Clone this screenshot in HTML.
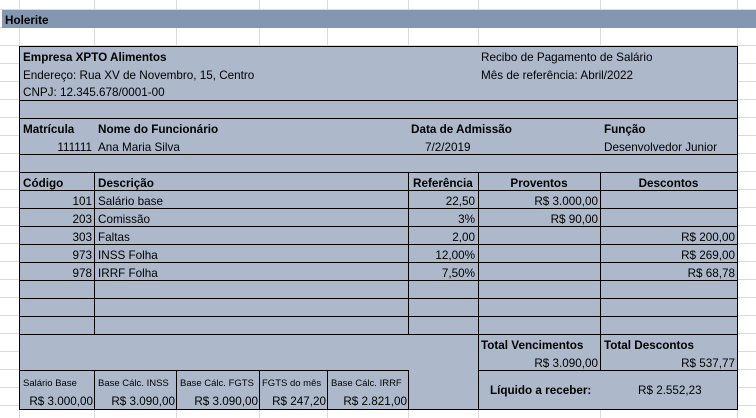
<!DOCTYPE html>
<html><head><meta charset="utf-8"><style>
*{margin:0;padding:0;box-sizing:border-box}
body{width:756px;height:418px;overflow:hidden;background:#fff;position:relative;font-family:"Liberation Sans",Arial,sans-serif;font-size:11.7px;color:#000;
background-image:linear-gradient(#dadada 1px,transparent 1px);background-size:100% 18px;background-position:0 9px}
.v{position:absolute;top:0;height:418px;width:1px;background:#dadada}
.bar{position:absolute;left:2px;top:10px;width:754px;height:18px;background:#8497b0}
.form{position:absolute;left:19px;top:46px;width:719px;height:364px;background:#adb9ca;border:1px solid #000}
.h{position:absolute;height:1px;background:#000}
.vl{position:absolute;width:1px;background:#000}
.t{position:absolute;line-height:18px;white-space:nowrap;height:18px;margin-top:1px}
.b{font-weight:bold}
.r{text-align:right}
.c{text-align:center}
.s{font-size:9.5px}
</style></head><body>
<div class="v" style="left:19px"></div><div class="v" style="left:94px"></div><div class="v" style="left:176px"></div><div class="v" style="left:259px"></div><div class="v" style="left:327px"></div><div class="v" style="left:408px"></div><div class="v" style="left:478px"></div><div class="v" style="left:600px"></div><div class="v" style="left:737px"></div>
<div class="bar"></div>
<div class="t b" style="left:5px;top:11px">Holerite</div>
<div class="form"></div>
<div class="h" style="left:19px;top:100px;width:719px"></div>
<div class="h" style="left:19px;top:118px;width:719px"></div>
<div class="h" style="left:19px;top:154px;width:719px"></div>
<div class="h" style="left:19px;top:172px;width:719px"></div>
<div class="h" style="left:19px;top:190px;width:719px"></div>
<div class="h" style="left:19px;top:208px;width:719px"></div>
<div class="h" style="left:19px;top:226px;width:719px"></div>
<div class="h" style="left:19px;top:244px;width:719px"></div>
<div class="h" style="left:19px;top:262px;width:719px"></div>
<div class="h" style="left:19px;top:280px;width:719px"></div>
<div class="h" style="left:19px;top:298px;width:719px"></div>
<div class="h" style="left:19px;top:316px;width:719px"></div>
<div class="h" style="left:19px;top:334px;width:719px"></div>
<div class="h" style="left:19px;top:370px;width:389px"></div>
<div class="h" style="left:478px;top:370px;width:260px"></div>
<div class="vl" style="left:94px;top:172px;height:162px"></div>
<div class="vl" style="left:408px;top:172px;height:162px"></div>
<div class="vl" style="left:478px;top:172px;height:238px"></div>
<div class="vl" style="left:600px;top:172px;height:198px"></div>
<div class="vl" style="left:94px;top:370px;height:40px"></div>
<div class="vl" style="left:176px;top:370px;height:40px"></div>
<div class="vl" style="left:259px;top:370px;height:40px"></div>
<div class="vl" style="left:327px;top:370px;height:40px"></div>
<div class="vl" style="left:408px;top:370px;height:40px"></div>
<div class="t b" style="left:23px;top:48px">Empresa XPTO Alimentos</div>
<div class="t" style="left:23px;top:66px">Endereço: Rua XV de Novembro, 15, Centro</div>
<div class="t" style="left:23px;top:83px">CNPJ: 12.345.678/0001-00</div>
<div class="t" style="left:481px;top:48px">Recibo de Pagamento de Salário</div>
<div class="t" style="left:481px;top:66px">Mês de referência: Abril/2022</div>
<div class="t b" style="left:23px;top:120px">Matrícula</div>
<div class="t b" style="left:98px;top:120px">Nome do Funcionário</div>
<div class="t b" style="left:411px;top:120px">Data de Admissão</div>
<div class="t b" style="left:604px;top:120px">Função</div>
<div class="t r" style="left:19px;top:138px;width:73px">111111</div>
<div class="t" style="left:98px;top:138px">Ana Maria Silva</div>
<div class="t" style="left:425px;top:138px">7/2/2019</div>
<div class="t" style="left:604px;top:138px">Desenvolvedor Junior</div>
<div class="t b" style="left:23px;top:174px">Código</div>
<div class="t b" style="left:98px;top:174px">Descrição</div>
<div class="t b" style="left:413px;top:174px">Referência</div>
<div class="t b c" style="left:478px;top:174px;width:122px">Proventos</div>
<div class="t b c" style="left:600px;top:174px;width:137px">Descontos</div>
<div class="t r" style="left:19px;top:192px;width:73px">101</div>
<div class="t" style="left:98px;top:192px">Salário base</div>
<div class="t r" style="left:408px;top:192px;width:67px">22,50</div>
<div class="t r" style="left:478px;top:192px;width:120px">R$ 3.000,00</div>
<div class="t r" style="left:19px;top:210px;width:73px">203</div>
<div class="t" style="left:98px;top:210px">Comissão</div>
<div class="t r" style="left:408px;top:210px;width:67px">3%</div>
<div class="t r" style="left:478px;top:210px;width:120px">R$ 90,00</div>
<div class="t r" style="left:19px;top:228px;width:73px">303</div>
<div class="t" style="left:98px;top:228px">Faltas</div>
<div class="t r" style="left:408px;top:228px;width:67px">2,00</div>
<div class="t r" style="left:600px;top:228px;width:135px">R$ 200,00</div>
<div class="t r" style="left:19px;top:246px;width:73px">973</div>
<div class="t" style="left:98px;top:246px">INSS Folha</div>
<div class="t r" style="left:408px;top:246px;width:67px">12,00%</div>
<div class="t r" style="left:600px;top:246px;width:135px">R$ 269,00</div>
<div class="t r" style="left:19px;top:264px;width:73px">978</div>
<div class="t" style="left:98px;top:264px">IRRF Folha</div>
<div class="t r" style="left:408px;top:264px;width:67px">7,50%</div>
<div class="t r" style="left:600px;top:264px;width:135px">R$ 68,78</div>
<div class="t b" style="left:481px;top:336px">Total Vencimentos</div>
<div class="t b" style="left:604px;top:336px">Total Descontos</div>
<div class="t r" style="left:478px;top:354px;width:120px">R$ 3.090,00</div>
<div class="t r" style="left:600px;top:354px;width:135px">R$ 537,77</div>
<div class="t b" style="left:490px;top:381px">Líquido a receber:</div>
<div class="t" style="left:638px;top:381px">R$ 2.552,23</div>
<div class="t s" style="left:23px;top:374px">Salário Base</div>
<div class="t s" style="left:98px;top:374px">Base Cálc. INSS</div>
<div class="t s" style="left:180px;top:374px">Base Cálc. FGTS</div>
<div class="t s" style="left:262px;top:374px">FGTS do mês</div>
<div class="t s" style="left:331px;top:374px">Base Cálc. IRRF</div>
<div class="t r" style="left:19px;top:392px;width:74px">R$ 3.000,00</div>
<div class="t r" style="left:94px;top:392px;width:81px">R$ 3.090,00</div>
<div class="t r" style="left:176px;top:392px;width:82px">R$ 3.090,00</div>
<div class="t r" style="left:259px;top:392px;width:67px">R$ 247,20</div>
<div class="t r" style="left:327px;top:392px;width:80px">R$ 2.821,00</div>
</body></html>
